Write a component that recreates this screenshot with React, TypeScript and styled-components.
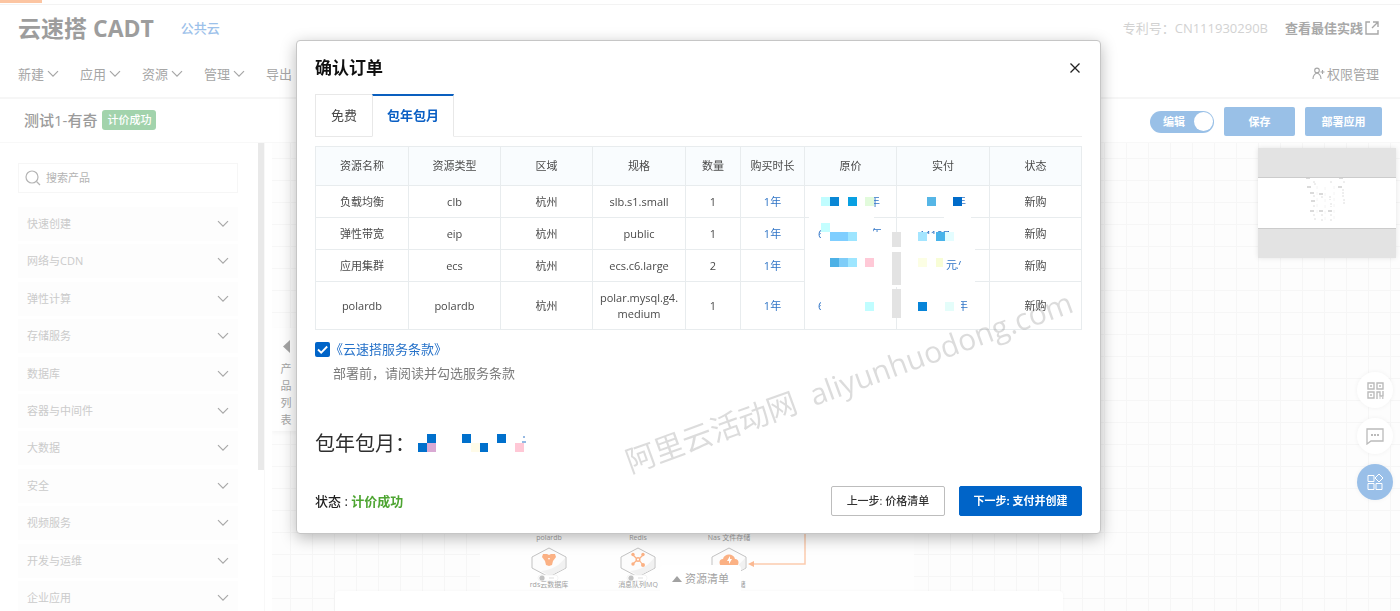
import React from 'react';
import styled, { createGlobalStyle, css } from 'styled-components';

const GlobalStyle = createGlobalStyle`
  *, *::before, *::after { box-sizing: border-box; }
  body {
    margin: 0;
    background: #fff;
    color: #4a4a4a;
    overflow: hidden;
    font-family: 'Open Sans', 'Noto Sans CJK SC', sans-serif;
    font-size: 11px;
    line-height: 16px;
  }
  button, input { font: inherit; color: inherit; margin: 0; }
  button { padding: 0; border: 0; background: none; cursor: pointer; }
  a { text-decoration: none; color: inherit; }
`;

const Page = styled.div`
  display: flex;
  flex-direction: column;
  height: 100vh;
`;
const LoadingTrack = styled.div`
  flex: none;
  height: 5px;
  border-bottom: 1px solid #f3f3f3;
`;
const LoadingBar = styled.div`
  width: 3%;
  height: 3px;
  background: #fcc5a2;
`;
const Header = styled.header`
  flex: none;
  display: flex;
  flex-direction: column;
  height: 94px;
  padding: 0 21px 0 18px;
  border-bottom: 2px solid #f6f6f6;
  font-size: 13px;
  color: #a6a6a6;
`;
const HeaderRow = styled.div<{ $height: number }>`
  display: flex;
  align-items: center;
  height: ${(p) => p.$height}px;
`;
const Brand = styled.h1`
  margin: 0 27px 0 0;
  font-size: 23px;
  line-height: 32px;
  font-weight: 700;
  color: #9d9d9d;
`;
const CloudLink = styled.a`
  font-weight: 500;
  color: #9cc1ea;
`;
const Patent = styled.span`
  margin-left: auto;
  color: #d2d2d2;
`;
const PracticeLink = styled.a`
  display: flex;
  align-items: center;
  gap: 2px;
  margin-left: 17px;
  font-weight: 700;
  color: #a8a8a8;
`;
const Menu = styled.nav`
  display: flex;
  gap: 21px;
`;
const MenuButton = styled.button`
  display: flex;
  align-items: center;
  gap: 3px;
`;
const PermissionLink = styled.a`
  display: flex;
  align-items: center;
  gap: 2px;
  margin-left: auto;
`;
const ProjectBar = styled.div`
  flex: none;
  display: flex;
  align-items: center;
  height: 44px;
  padding: 0 18px 0 24px;
  border-bottom: 1px solid #f8f8f8;
`;
const Project = styled.div`
  display: flex;
  align-items: center;
  height: 22px;
  margin-bottom: 2px;
`;
const ProjectName = styled.h2`
  margin: 0 5px 0 0;
  font-size: 15px;
  line-height: 20px;
  font-weight: 500;
  color: #9b9b9b;
`;
const Badge = styled.span`
  height: 20px;
  padding: 2px 5px;
  border-radius: 3px;
  background: #a2d3ac;
  color: #fff;
  font-weight: 500;
`;
const Actions = styled.div`
  display: flex;
  align-items: center;
  gap: 10px;
  margin: 2px 0 0 auto;
  color: #fff;
  font-weight: 700;
`;
const Switch = styled.label`
  display: flex;
  align-items: center;
  justify-content: space-between;
  width: 64px;
  height: 22px;
  padding: 0 1px 0 13px;
  border-radius: 11px;
  background: #99c0e7;
  cursor: pointer;
`;
const SwitchInput = styled.input`
  appearance: none;
  width: 19px;
  height: 19px;
  border-radius: 50%;
  background: #fff;
`;
const PaleButton = styled.button<{ $width: number }>`
  width: ${(p) => p.$width}px;
  height: 29px;
  border-radius: 2px;
  background: #99c0e7;
`;
const Body = styled.div`
  flex: 1;
  min-height: 0;
  display: flex;
`;
const Sidebar = styled.aside`
  flex: none;
  display: flex;
  width: 265px;
  border-right: 1px solid #f8f8f8;
  overflow: hidden;
`;
const SidebarContent = styled.div`
  flex: 1;
  padding: 20px 20px 0 18px;
`;
const ScrollThumb = styled.div`
  width: 6px;
  height: 327px;
  background: #e9e9e9;
`;
const SearchBox = styled.label`
  display: flex;
  align-items: center;
  gap: 5px;
  height: 30px;
  padding: 0 6px;
  border: 1px solid #f6f6f6;
  color: #b4b4b4;
`;
const SearchInput = styled.input`
  flex: 1;
  min-width: 0;
  padding: 0;
  border: 0;
  outline: 0;
  background: none;
  &::placeholder { color: #b4b4b4; opacity: 1; }
`;
const CategoryList = styled.div`
  display: flex;
  flex-direction: column;
  justify-content: space-between;
  height: 408px;
  margin-top: 14px;
`;
const CategoryButton = styled.button`
  display: flex;
  align-items: center;
  justify-content: space-between;
  height: 34px;
  padding: 0 9px;
  background: #fdfdfd;
  color: #cbcbcb;
  svg { color: #a8a8a8; }
`;
const Canvas = styled.main`
  position: relative;
  flex: 1;
  margin-left: 7px;
  overflow: hidden;
  background-color: #fdfdfd;
  background-image: linear-gradient(#f6f6f6 1px, transparent 1px),
    linear-gradient(90deg, #f6f6f6 1px, transparent 1px);
  background-size: 22px 22px;
  background-position: 18px 15px;
`;
const CollapseHandle = styled.button`
  position: absolute;
  left: 0;
  top: 185px;
  display: flex;
  flex-direction: column;
  align-items: center;
  gap: 7px;
  width: 28px;
  height: 103px;
  padding-top: 12px;
  background: #fefefe;
  color: #a4a4a4;
  box-shadow: 0 2px 4px rgba(0, 0, 0, 0.04);
`;
const HandleText = styled.span`
  width: 12px;
  line-height: 17px;
`;
const DiagramArea = styled.div`
  position: absolute;
  left: 208px;
  top: 380px;
  width: 434px;
  height: 80px;
  background: #fefefe;
`;
const Node = styled.div<{ $left: number }>`
  position: absolute;
  left: ${(p) => p.$left}px;
  top: 389px;
  display: flex;
  flex-direction: column;
  align-items: center;
  width: 80px;
  font-size: 7px;
  line-height: 12px;
  color: #a0a0a0;
  svg { margin: 3px 0 -4px; }
`;
const LabelTail = styled.span`
  position: relative;
  padding-left: 26px;
`;
const Wire = styled.svg`
  position: absolute;
  left: 474px;
  top: 380px;
`;
const ResourcePanel = styled.section`
  position: absolute;
  left: 63px;
  right: 337px;
  bottom: 0;
  height: 20px;
  border-radius: 4px 4px 0 0;
  background: #fff;
  box-shadow: 0 0 3px rgba(0, 0, 0, 0.04);
`;
const ResourceTab = styled.button`
  position: absolute;
  left: 325px;
  top: -26px;
  display: flex;
  align-items: center;
  justify-content: center;
  gap: 3px;
  width: 81px;
  height: 28px;
  border-radius: 4px 4px 0 0;
  background: #fff;
  color: #a2a2a2;
`;
const MiniMap = styled.div`
  position: absolute;
  right: 4px;
  top: 5px;
  display: flex;
  align-items: center;
  width: 138px;
  height: 110px;
  background: #e3e3e3;
  box-shadow: 0 0 5px rgba(0, 0, 0, 0.1);
`;
const MiniView = styled.div`
  display: flex;
  justify-content: center;
  width: 100%;
  height: 52px;
  border: solid #ccc;
  border-width: 1px 0;
  background: #fff;
`;
const FloatingTools = styled.div`
  position: absolute;
  right: 7px;
  top: 229px;
  display: flex;
  flex-direction: column;
  gap: 10px;
`;
const RoundButton = styled.button<{ $active?: boolean }>`
  display: flex;
  align-items: center;
  justify-content: center;
  width: 36px;
  height: 36px;
  border-radius: 50%;
  background: #fff;
  color: #bbb;
  box-shadow: 0 0 5px rgba(0, 0, 0, 0.05);
  ${(p) => p.$active && css`
    background: #99bfe8;
    color: #fff;
  `}
`;

const Overlay = styled.div`
  position: fixed;
  inset: 0;
  display: flex;
  align-items: flex-start;
  justify-content: center;
  padding: 40px 3px 0 0;
`;
const Dialog = styled.section`
  position: relative;
  width: 805px;
  max-width: 100%;
  padding: 0 18px 17px;
  border: 1px solid #c6c6c6;
  border-radius: 4px;
  background: #fff;
  box-shadow: 0 4px 16px rgba(0, 0, 0, 0.28);
`;
const DialogHeader = styled.header`
  display: flex;
  align-items: center;
  justify-content: space-between;
  height: 53px;
`;
const DialogTitle = styled.h2`
  margin: 0;
  font-size: 17px;
  line-height: 24px;
  font-weight: 700;
  color: #111;
`;
const CloseButton = styled.button`
  display: flex;
  align-items: center;
  justify-content: center;
  width: 14px;
  height: 24px;
  color: #222;
`;
const Tabs = styled.div`
  display: flex;
  height: 43px;
  margin-bottom: 9px;
  border-bottom: 1px solid #eee;
`;
const Tab = styled.button<{ $active?: boolean }>`
  height: 43px;
  padding: 0 15px 1px;
  border: 1px solid #e8e8e8;
  border-right: 0;
  font-size: 13px;
  ${(p) => p.$active && css`
    padding: 0 14px 2px;
    border-top: 2px solid #0a5fbf;
    border-right: 1px solid #e8e8e8;
    border-bottom-color: #fff;
    background: #fff;
    font-weight: 700;
    color: #0a5fc4;
  `}
`;
const TableWrap = styled.div`
  position: relative;
`;
const Table = styled.table`
  width: 100%;
  border-collapse: collapse;
  table-layout: fixed;
  text-align: center;
`;
const Cell = styled.td`
  height: 32px;
  padding: 0 6px;
  border: 1px solid #e8ecee;
  overflow-wrap: anywhere;
`;
const TallCell = styled(Cell)`
  height: 48px;
`;
const HeadCell = styled.th`
  height: 39px;
  padding: 0;
  border: 1px solid #e8ecee;
  background: #f9fcfe;
  font-weight: 400;
`;
const DurationLink = styled.a`
  color: #2f74c6;
`;
const PriceMosaic = styled.svg`
  position: absolute;
  right: 93px;
  top: 40px;
  font-size: 11px;
`;
const Terms = styled.label`
  display: flex;
  align-items: center;
  height: 20px;
  margin-top: 9px;
  font-size: 13px;
  line-height: 20px;
  color: #2672c9;
`;
const CheckWrap = styled.span`
  display: grid;
  width: 15px;
  height: 15px;
  > * { grid-area: 1 / 1; }
`;
const CheckInput = styled.input`
  appearance: none;
  border-radius: 2px;
  background: #0064c8;
`;
const TermsHint = styled.p`
  margin: 4px 0 0 18px;
  font-size: 13px;
  line-height: 20px;
  color: #7b7b7b;
`;
const Total = styled.div`
  display: flex;
  align-items: center;
  gap: 3px;
  height: 30px;
  margin-top: 46px;
  font-size: 20px;
  line-height: 30px;
  color: #2f2f2f;
`;
const DialogFooter = styled.footer`
  display: flex;
  align-items: center;
  gap: 14px;
  height: 30px;
  margin-top: 27px;
`;
const Status = styled.div`
  margin-right: auto;
  font-size: 13px;
  font-weight: 500;
  color: #222;
`;
const Success = styled.strong`
  font-weight: 700;
  color: #4ea532;
`;
const FooterButton = styled.button<{ $primary?: boolean }>`
  width: ${(p) => (p.$primary ? 123 : 114)}px;
  height: 30px;
  border: 1px solid ${(p) => (p.$primary ? '#0064c8' : '#bdbdbd')};
  border-radius: 2px;
  background: ${(p) => (p.$primary ? '#0064c8' : '#fff')};
  color: ${(p) => (p.$primary ? '#fff' : '#333')};
  font-weight: ${(p) => (p.$primary ? 700 : 500)};
`;
const Watermark = styled.div`
  position: absolute;
  left: 552px;
  top: 341px;
  transform: translate(-50%, -50%) rotate(-20deg);
  font-size: 30px;
  line-height: 40px;
  white-space: pre;
  color: rgba(60, 60, 60, 0.18);
  pointer-events: none;
`;

const Chevron = () => (
  <svg width="12" height="8" viewBox="0 0 12 8" fill="none" stroke="currentColor" strokeWidth="1.2" aria-hidden="true">
    <path d="M1 1.2 6 6.2 11 1.2" />
  </svg>
);

const menus = ['新建', '应用', '资源', '管理'];
const categories = ['快速创建', '网络与CDN', '弹性计算', '存储服务', '数据库', '容器与中间件', '大数据', '安全', '视频服务', '开发与运维', '企业应用'];
const columns: [string, number][] = [
  ['资源名称', 93], ['资源类型', 92], ['区域', 92], ['规格', 93], ['数量', 55],
  ['购买时长', 64], ['原价', 92], ['实付', 93], ['状态', 92],
];
const rows = [
  ['负载均衡', 'clb', '杭州', 'slb.s1.small', '1'],
  ['弹性带宽', 'eip', '杭州', 'public', '1'],
  ['应用集群', 'ecs', '杭州', 'ecs.c6.large', '2'],
  ['polardb', 'polardb', '杭州', 'polar.mysql.g4.medium', '1'],
];

const Hexagon = ({ children }: { children: React.ReactNode }) => (
  <svg width="36" height="36" viewBox="0 0 36 36" fill="none" aria-hidden="true">
    <path d="M18 1 35 10V21L18 30 1 21V10Z" fill="#fcfcfc" stroke="#bcbcbc" strokeWidth=".9" />
    <path d="M34 11v10l-15 8-9-5C21 23 29 18 34 11Z" fill="#f1f1f1" />
    {children}
    <rect x="7" y="28" width="20" height="6" rx="3" fill="#fff" stroke="#ececec" strokeWidth=".6" />
    <circle cx="11" cy="31" r="2.6" fill="#c2c2c2" />
    <path d="M18 31h5" stroke="#ddd" />
  </svg>
);

// Censored price columns: [x, y, width, height, colour]
const mosaic: [number, number, number, number, string][] = [
  [17, 11, 9, 9, '#c0fdff'], [26, 11, 9, 9, '#0a87d5'], [44, 11, 9, 9, '#09a0e2'], [61, 11, 9, 9, '#e2fbdc'],
  [123, 11, 9, 9, '#56b6e6'], [149, 11, 9, 9, '#006bc9'],
  [17, 37, 9, 9, '#c4feff'], [26, 46, 18, 9, '#7fceff'], [44, 46, 9, 9, '#9de5ff'],
  [114, 46, 9, 9, '#a4e5ff'], [132, 46, 9, 9, '#48b3ea'], [141, 46, 9, 9, '#e4fdff'],
  [26, 72, 9, 9, '#4db1e6'], [35, 72, 9, 9, '#7fcdf8'], [44, 72, 9, 9, '#9ee6ff'], [61, 72, 9, 9, '#ffc9d7'],
  [114, 72, 9, 9, '#fcfee4'], [132, 72, 7, 9, '#f8fdd6'],
  [61, 116, 9, 9, '#c0fdff'], [114, 116, 9, 9, '#0784d8'], [141, 116, 9, 9, '#e4fdfa'],
  [88, 46, 9, 15, '#e3e3e3'], [88, 66, 9, 33, '#e3e3e3'], [88, 103, 9, 29, '#e3e3e3'],
];
const totalMosaic: [number, number, string][] = [
  [9, 0, '#0070cc'], [0, 9, '#0070cc'], [9, 9, '#d9a9d3'], [44, 0, '#0070cc'],
  [61, 9, '#0070cc'], [79, 0, '#0070cc'], [97, 9, '#ffc8d6'], [53, 9, '#fffbe8'],
];

export default function App() {
  return (
    <>
      <GlobalStyle />
      <Page>
        <LoadingTrack><LoadingBar /></LoadingTrack>
        <Header>
          <HeaderRow $height={45}>
            <Brand>云速搭 CADT</Brand>
            <CloudLink href="#cloud">公共云</CloudLink>
            <Patent>专利号：CN111930290B</Patent>
            <PracticeLink href="#practice">
              查看最佳实践
              <svg width="14" height="14" viewBox="0 0 14 14" fill="none" stroke="currentColor" strokeWidth="1.4" aria-hidden="true">
                <path d="M5 1H1v12h12V9M8 1h5v5M13 1 7 7" />
              </svg>
            </PracticeLink>
          </HeaderRow>
          <HeaderRow $height={47}>
            <Menu>
              {menus.map((m) => <MenuButton key={m}>{m}<Chevron /></MenuButton>)}
              <MenuButton>导出</MenuButton>
            </Menu>
            <PermissionLink href="#permission">
              <svg width="13" height="13" viewBox="0 0 13 13" fill="none" stroke="currentColor" strokeWidth="1.1" aria-hidden="true">
                <circle cx="5" cy="3.4" r="2.3" />
                <path d="M1 12c0-3 1.200-5 4-6 2.800 1 4 3 4 6M8.500 5h4M10.500 3v4" />
              </svg>
              权限管理
            </PermissionLink>
          </HeaderRow>
        </Header>
        <ProjectBar>
          <Project>
            <ProjectName>测试1-有奇</ProjectName>
            <Badge>计价成功</Badge>
          </Project>
          <Actions>
            <Switch>编辑<SwitchInput type="checkbox" role="switch" defaultChecked /></Switch>
            <PaleButton $width={71}>保存</PaleButton>
            <PaleButton $width={77}>部署应用</PaleButton>
          </Actions>
        </ProjectBar>
        <Body>
          <Sidebar>
            <SidebarContent>
              <SearchBox>
                <svg width="16" height="16" viewBox="0 0 16 16" fill="none" stroke="currentColor" strokeWidth="1.2" aria-hidden="true">
                  <circle cx="7" cy="7" r="6" /><path d="m11.500 11.500 3.500 3.500" />
                </svg>
                <SearchInput type="text" placeholder="搜索产品" aria-label="搜索产品" />
              </SearchBox>
              <CategoryList>
                {categories.map((c) => <CategoryButton key={c}>{c}<Chevron /></CategoryButton>)}
              </CategoryList>
            </SidebarContent>
            <ScrollThumb />
          </Sidebar>
          <Canvas>
            <DiagramArea />
            <Node $left={237}>
              polardb
              <Hexagon><path d="M12 7h4l2 1 2-1h4l1 3-3 4-1 4-3 1-3-1-1-4-3-4Z" fill="#fbb184" /><path d="m17 11 2 0-1 2Z" fill="#fff" /></Hexagon>
              rds云数据库
            </Node>
            <Node $left={326}>
              Redis
              <Hexagon>
                <g stroke="#fbb184" strokeWidth="1.2"><path d="m13 8 4 4M23 8l-4 4M13 17l4-4M19 13l4 5" /></g>
                <g fill="#fbb184"><circle cx="13" cy="7.500" r="1.700" /><circle cx="23" cy="7.500" r="1.700" /><circle cx="13" cy="17" r="1.700" /><circle cx="23" cy="18" r="2" /><circle cx="18" cy="12.500" r="2.500" /></g>
                <circle cx="18" cy="12.500" r="1" fill="#fff" />
              </Hexagon>
              消息队列MQ
            </Node>
            <Node $left={417}>
              Nas 文件存储
              <Hexagon>
                <path d="M12 19a3.500 3.500 0 0 1 0-7c1-6 11-6 12 0a3.500 3.500 0 0 1 0 7Z" fill="#fbb184" />
                <path d="m19 9-3 5h2v3l3-5h-2Z" fill="#fff" />
              </Hexagon>
              <LabelTail>储</LabelTail>
            </Node>
            <Wire width="62" height="48" fill="none" aria-hidden="true">
              <path d="M59 0v41H5" stroke="#fccbae" strokeWidth="1.500" /><path d="M2 41l6-3v6Z" fill="#fbb992" />
            </Wire>
            <CollapseHandle>
              <svg width="7" height="13" viewBox="0 0 7 13" fill="currentColor" aria-hidden="true"><path d="M7 0v13L0 6.500Z" /></svg>
              <HandleText>产品列表</HandleText>
            </CollapseHandle>
            <MiniMap>
              <MiniView>
                <svg width="44" height="48" fill="none" stroke="#ccc" strokeWidth="1" aria-hidden="true">
                  <path d="M1 0h5M34 0h5M2 9h5M33 9h5M5 15h5M14 16h4M6 23h5M5 33h5M14 33h4M23 33h4" stroke="#b5b5b5" strokeDasharray="4 1" />
                  <path d="M8 4h2M25 4h2M38 4h2M9 6h2M38 11v8M39 21v6M8 18h3M8 28h3M16 19h3M25 18v4M26 25v4M8 37h3M16 37h3M25 37h3M9 41h2M16 42h3M25 42h2" stroke="#dedede" strokeDasharray="2 1" />
                  <path d="M12 8v28M20 9v36M29 8v33" stroke="#f4f4f4" strokeDasharray="3 3" />
                </svg>
              </MiniView>
            </MiniMap>
            <FloatingTools>
              <RoundButton aria-label="二维码">
                <svg width="17" height="17" viewBox="0 0 17 17" fill="none" stroke="currentColor" strokeWidth="1.400" aria-hidden="true">
                  <path d="M1 1h6v6H1ZM10 1h6v6h-6ZM1 10h6v6H1ZM3 4h2M12 4h2M3 13h2M10 17v-7h3v4h3V9M12.500 16h1M15 16h1.500" />
                </svg>
              </RoundButton>
              <RoundButton aria-label="反馈">
                <svg width="18" height="17" viewBox="0 0 18 17" fill="none" stroke="currentColor" strokeWidth="1.300" aria-hidden="true">
                  <path d="M1 1h16v12H5l-4 3Z" /><path d="M5 7h2M8 7h2M11 7h2" strokeWidth="1.800" />
                </svg>
              </RoundButton>
              <RoundButton $active aria-label="应用">
                <svg width="18" height="18" viewBox="0 0 18 18" fill="none" stroke="currentColor" strokeWidth="1" aria-hidden="true">
                  <path d="M2 2.500h6v6H2ZM2 10.500h6v6H2ZM10 10.500h6v6h-6ZM13 1l4 4-4 4-4-4Z" />
                </svg>
              </RoundButton>
            </FloatingTools>
            <ResourcePanel>
              <ResourceTab>
                <svg width="10" height="6" viewBox="0 0 10 6" fill="currentColor" aria-hidden="true"><path d="M0 6 5 0l5 6Z" /></svg>
                资源清单
              </ResourceTab>
            </ResourcePanel>
          </Canvas>
        </Body>
      </Page>

      <Overlay>
        <Dialog role="dialog" aria-labelledby="order-title">
          <DialogHeader>
            <DialogTitle id="order-title">确认订单</DialogTitle>
            <CloseButton aria-label="关闭">
              <svg width="10" height="10" viewBox="0 0 10 10" stroke="currentColor" strokeWidth="1.300" aria-hidden="true"><path d="m.5.5 9 9M9.500.5l-9 9" /></svg>
            </CloseButton>
          </DialogHeader>
          <Tabs role="tablist">
            <Tab role="tab" aria-selected="false">免费</Tab>
            <Tab role="tab" aria-selected="true" $active>包年包月</Tab>
          </Tabs>
          <TableWrap>
            <Table>
              <colgroup>{columns.map(([name, width]) => <col key={name} width={width} />)}</colgroup>
              <thead><tr>{columns.map(([name]) => <HeadCell key={name} scope="col">{name}</HeadCell>)}</tr></thead>
              <tbody>
                {rows.map((row, i) => {
                  const C = i === 3 ? TallCell : Cell;
                  return (
                    <tr key={row[0]}>
                      {row.map((v, j) => <C key={j}>{v}</C>)}
                      <C><DurationLink href="#duration">1年</DurationLink></C>
                      <C /><C /><C>新购</C>
                    </tr>
                  );
                })}
              </tbody>
            </Table>
            <PriceMosaic width="185" height="143" aria-hidden="true">
              <g fill="#fff">
                <path d="M5 21h65v14H5ZM140 21h27v14h-27ZM1 50h170v15H1ZM1 65h184v12H1ZM1 77h170v24H1Z" />
              </g>
              <g fill="#2f74c6">
                <text x="65" y="20">年</text><text x="151" y="20">年</text>
                <text x="14" y="52">6</text><text x="67" y="52">年</text>
                <text x="114" y="53">44197</text>
                <text x="142" y="83">元/</text>
                <text x="14" y="124">6</text><text x="153" y="124">年</text>
              </g>
              <g fill="#fff">
                <path d="M60 8h10v14H60ZM148 8h10v14h-10ZM17 40h46v16H17ZM60 46h20v10H60ZM60 40h9v16h-9ZM112 48h42v10h-42ZM17 112h30v14H17ZM150 112h7v14h-7ZM154 79h8v8h-8Z" />
              </g>
              {mosaic.map(([x, y, w, h, fill]) => <rect key={`${x}-${y}`} x={x} y={y} width={w} height={h} fill={fill} />)}
            </PriceMosaic>
          </TableWrap>
          <Terms>
            <CheckWrap>
              <CheckInput type="checkbox" defaultChecked />
              <svg width="15" height="15" viewBox="0 0 15 15" fill="none" stroke="#fff" strokeWidth="1.800" aria-hidden="true"><path d="m3 7.500 3.200 3.200L12.200 4.500" /></svg>
            </CheckWrap>
            <a href="#terms">《云速搭服务条款》</a>
          </Terms>
          <TermsHint>部署前，请阅读并勾选服务条款</TermsHint>
          <Total>
            包年包月：
            <svg width="110" height="20" aria-hidden="true">
              {totalMosaic.map(([x, y, fill]) => <rect key={`${x}-${y}`} x={x} y={y} width="9" height="9" fill={fill} />)}
              <path d="M105 3h2M104 8h4" stroke="#2f74c6" />
            </svg>
          </Total>
          <DialogFooter>
            <Status>状态 : <Success>计价成功</Success></Status>
            <FooterButton>上一步: 价格清单</FooterButton>
            <FooterButton $primary>下一步: 支付并创建</FooterButton>
          </DialogFooter>
          <Watermark aria-hidden="true">{'阿里云活动网  aliyunhuodong.com'}</Watermark>
        </Dialog>
      </Overlay>
    </>
  );
}
